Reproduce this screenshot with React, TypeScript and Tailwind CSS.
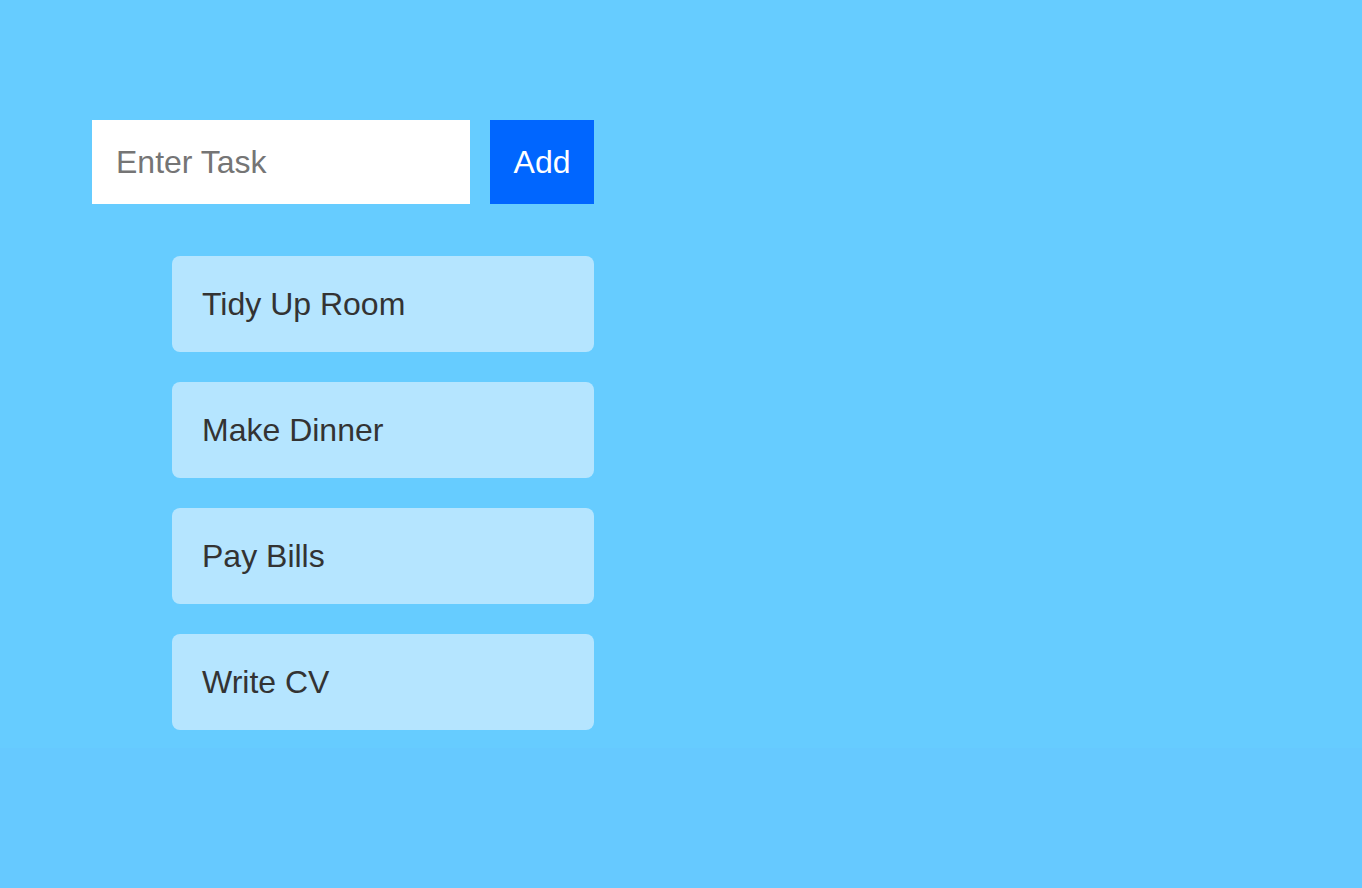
import React, { useState } from 'react';

const initialTasks = ['Tidy Up Room', 'Make Dinner', 'Pay Bills', 'Write CV'];

export default function App() {
  const [tasks, setTasks] = useState<string[]>(initialTasks);
  const [value, setValue] = useState('');

  const addTask = () => {
    if (!value.trim()) return;
    setTasks([...tasks, value.trim()]);
    setValue('');
  };

  return (
    <div
      className="min-h-[888px] bg-[#66c9ff]"
      style={{ fontFamily: '"Liberation Sans", Arial, Helvetica, sans-serif' }}
    >
      <div className="bg-[#66ccff] pt-[120px] pl-[92px] pb-[18px]">
        <div className="flex w-[502px] gap-[20px]">
          <input
            type="text"
            value={value}
            onChange={(e) => setValue(e.target.value)}
            placeholder="Enter Task"
            className="h-[84px] w-[378px] bg-white px-[24px] text-[32px] text-[#333] outline-none placeholder:text-[#757575]"
          />
          <button
            onClick={addTask}
            className="h-[84px] w-[104px] bg-[#0066ff] text-[32px] text-white"
          >
            Add
          </button>
        </div>

        <ul className="mt-[52px] ml-[80px] flex w-[422px] flex-col gap-[30px]">
          {tasks.map((task) => (
            <li
              key={task}
              className="flex h-[96px] items-center rounded-[8px] bg-[#b5e5ff] px-[30px] text-[32px] text-[#333]"
            >
              {task}
            </li>
          ))}
        </ul>
      </div>
    </div>
  );
}
